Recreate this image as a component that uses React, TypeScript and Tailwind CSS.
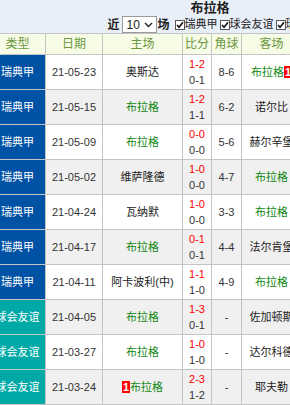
import React from "react";

type Match = {
  league: "swe" | "club";
  date: string;
  home: string;
  homeUs?: boolean;
  homeBadge?: string;
  ft: string;
  ht: string;
  corner: string;
  away: string;
  awayUs?: boolean;
  awayBadge?: string;
};

const matches: Match[] = [
  { league: "swe", date: "21-05-23", home: "奥斯达", ft: "1-2", ht: "0-1", corner: "8-6", away: "布拉格", awayUs: true, awayBadge: "1" },
  { league: "swe", date: "21-05-15", home: "布拉格", homeUs: true, ft: "1-2", ht: "1-1", corner: "6-2", away: "诺尔比" },
  { league: "swe", date: "21-05-09", home: "布拉格", homeUs: true, ft: "0-0", ht: "0-0", corner: "5-6", away: "赫尔辛堡" },
  { league: "swe", date: "21-05-02", home: "维萨隆德", ft: "1-0", ht: "0-0", corner: "4-7", away: "布拉格", awayUs: true },
  { league: "swe", date: "21-04-24", home: "瓦纳默", ft: "1-0", ht: "0-0", corner: "3-3", away: "布拉格", awayUs: true },
  { league: "swe", date: "21-04-17", home: "布拉格", homeUs: true, ft: "0-1", ht: "0-1", corner: "4-4", away: "法尔肯堡" },
  { league: "swe", date: "21-04-11", home: "阿卡波利(中)", ft: "1-1", ht: "1-0", corner: "4-9", away: "布拉格", awayUs: true },
  { league: "club", date: "21-04-05", home: "布拉格", homeUs: true, ft: "1-3", ht: "0-1", corner: "-", away: "佐加顿斯" },
  { league: "club", date: "21-03-27", home: "布拉格", homeUs: true, ft: "1-0", ht: "1-0", corner: "-", away: "达尔科德" },
  { league: "club", date: "21-03-24", home: "布拉格", homeUs: true, homeBadge: "1", ft: "2-3", ht: "1-2", corner: "-", away: "耶夫勒" },
];

function Badge({ n }: { n: string }) {
  return (
    <span className="inline-flex h-[12px] items-center bg-[#ff0000] px-[1px] text-[11px] font-bold leading-none text-white">
      {n}
    </span>
  );
}

function Check() {
  return (
    <span className="inline-flex h-[10px] w-[10px] items-center justify-center border border-[#555] bg-white">
      <svg width="8" height="8" viewBox="0 0 8 8">
        <path d="M1 4 L3 6.2 L7 1.2" fill="none" stroke="#111" strokeWidth="1.6" />
      </svg>
    </span>
  );
}

function Team({ name, us }: { name: string; us?: boolean }) {
  return <span className={`whitespace-nowrap ${us ? "text-[#118811]" : "text-[#222]"}`}>{name}</span>;
}

export default function App() {
  const cell = "flex items-center justify-center border-r border-[#c4c4c4] shrink-0";
  return (
    <div
      className="w-[290px] h-[405px] overflow-hidden bg-white text-[#333]"
      style={{ fontFamily: '"Liberation Sans", "Noto Sans CJK SC", sans-serif' }}
    >
      {/* page is wider than the window and scrolled ~10px to the right */}
      <div className="-ml-[10px] w-[440px]">
        <div className="flex h-[33px] flex-col items-center bg-[#e8eff8]">
          <div className="h-[16px] text-[13px] font-bold leading-[16px] text-[#222]">布拉格</div>
          <div className="ml-[6px] flex h-[17px] items-center whitespace-nowrap text-[11px] text-[#222]">
            <span className="text-[12px] font-bold">近</span>
            <span className="ml-[2px] flex h-[17px] w-[35px] items-center justify-between border border-[#9a9a9a] bg-white pl-[4px] pr-[3px] text-[12px]">
              10
              <svg width="9" height="6" viewBox="0 0 9 6">
                <path d="M1 1 L4.5 4.5 L8 1" fill="none" stroke="#222" strokeWidth="1.4" />
              </svg>
            </span>
            <span className="ml-[1px] text-[12px] font-bold">场</span>
            <span className="ml-[5px] flex items-center">
              <Check />
              <span>瑞典甲</span>
            </span>
            <span className="ml-[2px] flex items-center">
              <Check />
              <span>球会友谊</span>
            </span>
            <span className="ml-[2px] flex items-center">
              <Check />
              <span>瑞典杯</span>
            </span>
          </div>
        </div>

        <div className="flex h-[22px] border-y border-[#c4c4c4] bg-[#f6fce6] text-[12px] text-[#6b9640]">
          <div className={`${cell} w-[56px]`}>类型</div>
          <div className={`${cell} w-[57px]`}>日期</div>
          <div className={`${cell} w-[80px]`}>主场</div>
          <div className={`${cell} w-[29px]`}>比分</div>
          <div className={`${cell} w-[30px]`}>角球</div>
          <div className={`${cell} w-[60px]`}>客场</div>
          <div className={`${cell} w-[60px]`}>盘路</div>
          <div className={`${cell} flex-1`}>大小</div>
        </div>

        {matches.map((m, i) => (
          <div
            key={m.date}
            className={`flex h-[35px] border-b border-[#c4c4c4] text-[11px] ${i % 2 === 1 ? "bg-[#f0f0f0]" : "bg-white"}`}
          >
            <div
              className={`${cell} w-[56px] whitespace-nowrap text-white ${m.league === "swe" ? "bg-[#0052a5]" : "bg-[#00a9a6]"}`}
            >
              {m.league === "swe" ? "瑞典甲" : "球会友谊"}
            </div>
            <div className={`${cell} w-[57px] text-[#333]`}>{m.date}</div>
            <div className={`${cell} w-[80px]`}>
              {m.homeBadge && <Badge n={m.homeBadge} />}
              <Team name={m.home} us={m.homeUs} />
            </div>
            <div className={`${cell} w-[29px] flex-col leading-[16px]`}>
              <span className="text-[#ff0000]">{m.ft}</span>
              <span className="text-[#333]">{m.ht}</span>
            </div>
            <div className={`${cell} w-[30px] text-[#333]`}>{m.corner}</div>
            <div className={`${cell} w-[60px]`}>
              <Team name={m.away} us={m.awayUs} />
              {m.awayBadge && <Badge n={m.awayBadge} />}
            </div>
            <div className={`${cell} w-[60px]`}></div>
            <div className={`${cell} flex-1`}></div>
          </div>
        ))}
      </div>
    </div>
  );
}
